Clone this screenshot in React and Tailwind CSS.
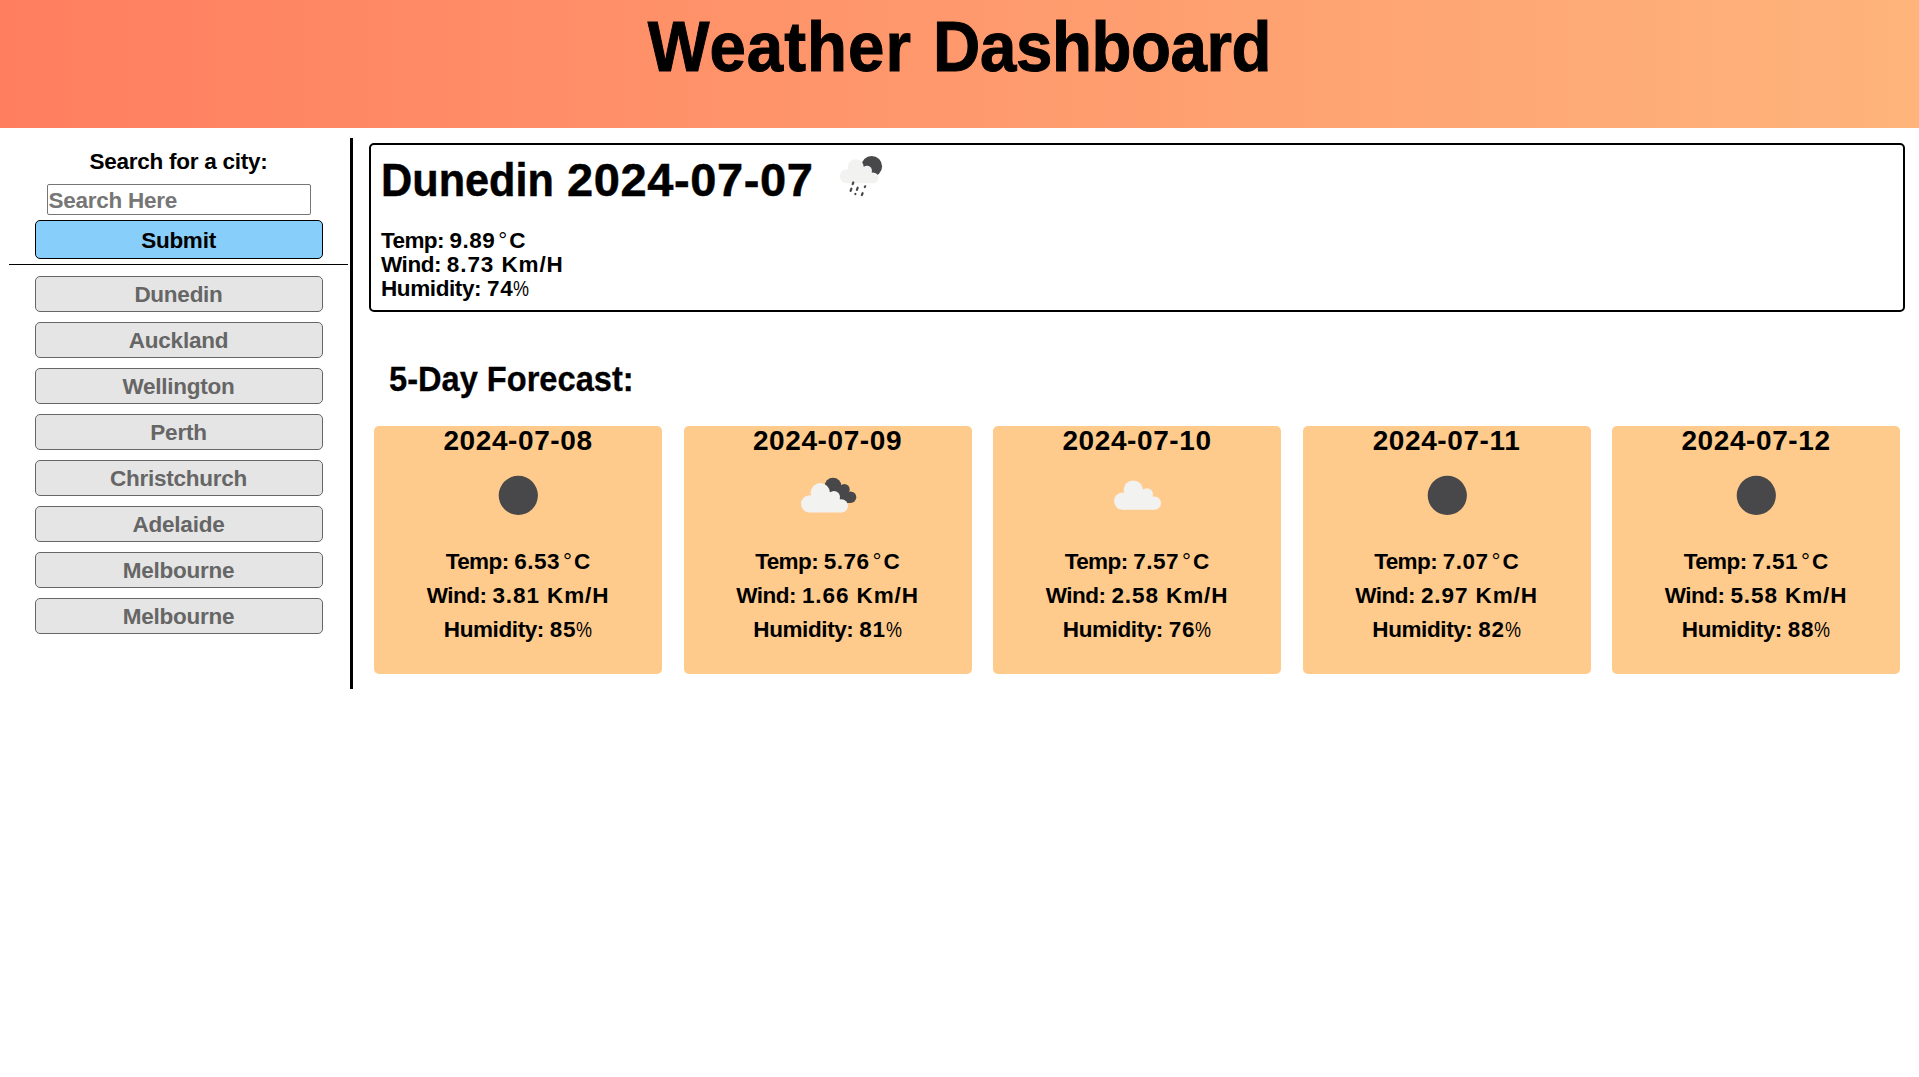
function CloudShape() {
  return (
    <g fill="#f2f2f0">
      <circle cx="16.6" cy="37.1" r="8.6" />
      <circle cx="27.3" cy="26.1" r="9.7" />
      <circle cx="41" cy="30.3" r="6" />
      <circle cx="48.4" cy="39.1" r="6.6" />
      <path d="M16.6 45.7V32L27 22L41 27L48.400 34V45.7Z" />
    </g>
  );
}

function Moon() {
  return (
    <svg className="h-[62px] w-[62px]" viewBox="0 0 62 62">
      <circle cx="31.3" cy="31.4" r="19.6" fill="#48484a" />
    </svg>
  );
}

function Cloud() {
  return (
    <svg className="h-[62px] w-[62px]" viewBox="0 0 62 62">
      <CloudShape />
    </svg>
  );
}

function BrokenClouds() {
  return (
    <svg className="h-[62px] w-[62px]" viewBox="0 0 62 62">
      <g fill="#48484a">
        <circle cx="36" cy="22.2" r="8.5" />
        <circle cx="47.3" cy="25.4" r="5.4" />
        <circle cx="53.5" cy="33.2" r="5.8" />
        <path d="M36 20L49 26L54 39H46L34 26Z" />
      </g>
      <g transform="translate(-4 2.7)">
        <CloudShape />
      </g>
    </svg>
  );
}

function RainCloud() {
  return (
    <svg className="-mt-[22px] ml-[17px] h-[62px] w-[62px]" viewBox="0 0 62 62">
      <circle cx="41.7" cy="21.4" r="10.4" fill="#48484a" />
      <g transform="translate(3.4 0.8) scale(0.82)">
        <CloudShape />
      </g>
      <g stroke="#48484a" strokeWidth="2.2" strokeLinecap="round">
        <path d="M23.300 37.500l-.6 1.6M21.400 43.700l-.8 2.2M27.700 42.700l-.8 2.2M35.200 41.300l-.4 .8M25.400 48.900l-.1 .2M32.600 48.200l-.8 1.900" />
      </g>
    </svg>
  );
}

const ICONS = { moon: Moon, cloud: Cloud, broken: BrokenClouds };

function Readings({ temp, wind, humidity }) {
  return (
    <>
      <p>
        <span className="tracking-[-0.6px]">Temp: </span>
        <span className="tracking-[0.5px]">{temp}</span>
        <span className="mx-[3px] inline-block w-[8px] text-center">
          <span className="font-normal">°</span>
        </span>
        C
      </p>
      <p>
        <span className="tracking-[-0.45px]">Wind: </span>
        <span className="tracking-[0.9px]">{wind} Km/H</span>
      </p>
      <p>
        <span className="tracking-[-0.4px]">Humidity: </span>
        <span className="tracking-[0.7px]">{humidity}</span>
        <span className="inline-block w-[16px] origin-left scale-x-[0.8] text-left font-normal">%</span>
      </p>
    </>
  );
}

const cities = [
  "Dunedin",
  "Auckland",
  "Wellington",
  "Perth",
  "Christchurch",
  "Adelaide",
  "Melbourne",
  "Melbourne",
];

const forecast = [
  { date: "2024-07-08", icon: "moon", temp: "6.53", wind: "3.81", humidity: 85 },
  { date: "2024-07-09", icon: "broken", temp: "5.76", wind: "1.66", humidity: 81 },
  { date: "2024-07-10", icon: "cloud", temp: "7.57", wind: "2.58", humidity: 76 },
  { date: "2024-07-11", icon: "moon", temp: "7.07", wind: "2.97", humidity: 82 },
  { date: "2024-07-12", icon: "moon", temp: "7.51", wind: "5.58", humidity: 88 },
];

export default function App() {
  return (
    <div className="min-h-screen bg-white font-['Liberation_Sans',Arial,sans-serif] text-[22.5px] font-bold text-black">
      <header className="h-[128px] bg-[linear-gradient(to_right,#ff7e5f,#feb47b)] pt-[7px] text-center">
        <h1 className="scale-x-[0.935] text-[70px] leading-[80px] [-webkit-text-stroke:1px_black] [word-spacing:2px]">
          <span className="tracking-[1.1px]">Weather </span>
          <span className="tracking-[-0.45px]">Dashboard</span>
        </h1>
      </header>

      <div className="flex pt-[10px]">
        <aside className="flex h-[551px] w-[353px] flex-col border-r-3 border-black pl-[9px] tracking-[-0.25px]">
          <form className="flex w-[339px] flex-col items-center border-b border-black pt-[9px] pb-[5px]">
            <label className="h-[37px] leading-[30px]">Search for a city:</label>
            <input
              className="h-[31px] w-[264px] rounded-[2px] border border-[#767676] px-px pt-[2px] placeholder:text-[#767676]"
              placeholder="Search Here"
            />
            <button
              type="button"
              className="mt-[5px] h-[39px] w-[288px] rounded-[5px] border border-black bg-[#87cefa] pt-[2px] leading-[35px]"
            >
              Submit
            </button>
          </form>
          <div className="mt-[11px] flex w-[339px] flex-col items-center gap-[10px]">
            {cities.map((city, i) => (
              <button
                key={i}
                className="h-[36px] w-[288px] rounded-[5px] border border-[#666] bg-[#e5e5e5] leading-[35px] text-[#666]"
              >
                {city}
              </button>
            ))}
          </div>
        </aside>

        <main className="flex-1 pt-[5px] pr-[14px] pl-[16px]">
          <section className="h-[169px] rounded-[5px] border-2 border-black pl-[10px] leading-[24px]">
            <div className="flex h-[84px] items-center text-[47px] leading-[50px] [-webkit-text-stroke:0.5px_black]">
              <h2 className="-mt-[14px] flex">
                <span className="w-[172px] origin-left scale-x-[0.92]">Dunedin</span>
                <span className="ml-[14px] tracking-[0.6px]">2024-07-07</span>
              </h2>
              <RainCloud />
            </div>
            <Readings temp="9.89" wind="8.73" humidity={74} />
          </section>

          <h3 className="mt-[47px] ml-[20px] origin-left scale-x-[0.945] text-[34.5px] leading-[40px] [-webkit-text-stroke:0.3px_black]">
            5-Day Forecast:
          </h3>

          <section className="mt-[27px] flex justify-between px-[5px]">
            {forecast.map((day) => {
              const Icon = ICONS[day.icon];
              return (
                <article
                  key={day.date}
                  className="flex h-[248px] w-[288px] flex-col items-center rounded-[5px] bg-[#ffcb8c] leading-[34px]"
                >
                  <h4 className="text-[28px] leading-[29px] tracking-[0.6px]">{day.date}</h4>
                  <div className="mt-[9px] mb-[19px]">
                    <Icon />
                  </div>
                  <Readings temp={day.temp} wind={day.wind} humidity={day.humidity} />
                </article>
              );
            })}
          </section>
        </main>
      </div>
    </div>
  );
}
